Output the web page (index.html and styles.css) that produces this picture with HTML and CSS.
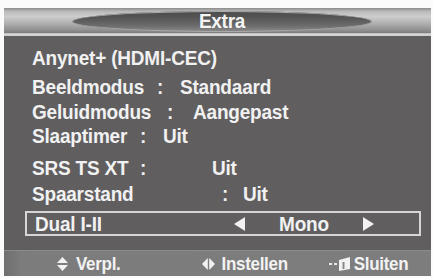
FILE: index.html
```html
<!DOCTYPE html>
<html>
<head>
<meta charset="utf-8">
<link rel="stylesheet" href="styles.css">
</head>
<body>
<div class="tv">
  <div class="titlebar">
    <div class="pill"><span class="t">Extra</span></div>
  </div>
  <div class="menu">
    <div class="row r1"><span class="t">Anynet+ (HDMI-CEC)</span></div>
    <div class="row r2"><span class="t lbl">Beeldmodus</span><span class="t colon">:</span><span class="t val">Standaard</span></div>
    <div class="row r3"><span class="t lbl">Geluidmodus</span><span class="t colon">:</span><span class="t val">Aangepast</span></div>
    <div class="row r4"><span class="t lbl">Slaaptimer</span><span class="t colon">:</span><span class="t val">Uit</span></div>
    <div class="row r5"><span class="t lbl">SRS TS XT</span><span class="t colon">:</span><span class="t val">Uit</span></div>
    <div class="row r6"><span class="t lbl">Spaarstand</span><span class="t colon">:</span><span class="t val">Uit</span></div>
    <div class="selected">
      <span class="t lbl">Dual I-II</span>
      <span class="arrow left"></span>
      <span class="t mono">Mono</span>
      <span class="arrow right"></span>
    </div>
  </div>
  <div class="footer">
    <div class="hint h1">
      <svg class="ico" width="11" height="14" viewBox="0 0 11 14"><path d="M5.5 0 L11 6 L0 6 Z M0 8 L11 8 L5.5 14 Z" fill="#f2f2f2"/></svg>
      <span class="t">Verpl.</span>
    </div>
    <div class="hint h2">
      <svg class="ico" width="13" height="12" viewBox="0 0 13 12"><path d="M0 6 L5.8 0 L5.8 12 Z M7.2 0 L13 6 L7.2 12 Z" fill="#f2f2f2"/></svg>
      <span class="t">Instellen</span>
    </div>
    <div class="hint h3">
      <svg class="ico" width="22" height="15" viewBox="0 0 22 15"><rect x="0" y="7" width="3" height="2" fill="#e8e8e8"/><rect x="5" y="7" width="3" height="2" fill="#e8e8e8"/><path d="M10 4 L21 1 L21 13 L10 15 Z" fill="#f2f2f2"/><rect x="13.5" y="6" width="2" height="7" fill="#8a8a8a"/></svg>
      <span class="t">Sluiten</span>
    </div>
  </div>
</div>
</body>
</html>
```
FILE: styles.css
```css
* { box-sizing: border-box; }
html, body { margin: 0; padding: 0; background: #fbfbfb; }
body {
  width: 433px;
  height: 278px;
  overflow: hidden;
  font-family: "Liberation Sans", Arial, sans-serif;
  font-weight: bold;
  color: #f1f1f1;
}
.t {
  display: inline-block;
  transform: scaleY(1.1);
}
.tv {
  margin: 8px 2px 2px 4px;
  height: 268px;
  background: #605e5f;
  display: flex;
  flex-direction: column;
}
.titlebar {
  height: 28px;
  background: linear-gradient(to bottom, #8c8c8c 0%, #b9b9b9 12%, #cdcdcd 30%, #b0b0b0 55%, #8e8e8e 80%, #7f7f7f 88%, #d8d8d8 92%, #cfcfcf 100%);
  display: flex;
  justify-content: center;
  padding-top: 3px;
}
.pill {
  width: 300px;
  height: 21px;
  margin-left: 9px;
  border-radius: 50% / 50%;
  background: linear-gradient(to bottom, #4a4a4a 0%, #575757 35%, #6c6c6c 70%, #8c8c8c 100%);
  box-shadow: 0 0 0 1px #aaa inset;
  font-size: 19px;
  line-height: 20px;
  text-align: center;
  color: #f4f4f4;
  letter-spacing: -0.3px;
}
.menu {
  flex: 1;
  padding-top: 10px;
  padding-left: 28px;
  font-size: 19px;
  letter-spacing: -0.2px;
}
.row {
  display: flex;
  line-height: 25px;
  white-space: nowrap;
}
.r1 { height: 28px; }
.r2 { height: 25px; }
.r3 { height: 25px; }
.r4 { height: 31px; }
.r5 { height: 27px; }
.r6 { height: 29px; }
.r2 .lbl { width: 125px; }
.r3 .lbl { width: 135px; }
.r4 .lbl { width: 108px; }
.r5 .lbl { width: 108px; }
.r6 .lbl { width: 190px; }
.r2 .colon { width: 23px; }
.r3 .colon { width: 26px; }
.r4 .colon { width: 23px; }
.r5 .colon { width: 72px; }
.r6 .colon { width: 21px; }
.selected {
  margin-left: -7px;
  width: 396px;
  height: 25px;
  border: 2px solid #d6d6d6;
  display: flex;
  align-items: center;
  padding-left: 8px;
  line-height: 21px;
}
.selected .lbl { width: 197px; }
.arrow {
  width: 0;
  height: 0;
  border-top: 7px solid transparent;
  border-bottom: 7px solid transparent;
}
.arrow.left { border-right: 11px solid #f1f1f1; margin-left: 2px; }
.arrow.right { border-left: 11px solid #f1f1f1; }
.mono { width: 84px; margin-left: 34px; }
.footer {
  height: 26px;
  background: linear-gradient(to right, #6f6f6f 0%, #7c7c7c 4%, #7d7d7d 100%);
  border-top: 1px solid #8a8a8a;
  display: flex;
  align-items: center;
  font-size: 17px;
  letter-spacing: -0.3px;
  color: #f2f2f2;
}
.hint { display: flex; align-items: center; }
.h1 { margin-left: 53px; gap: 8px; }
.h2 { margin-left: 81px; gap: 7px; }
.h3 { margin-left: 41px; gap: 3px; }
.ico { display: block; }
```
